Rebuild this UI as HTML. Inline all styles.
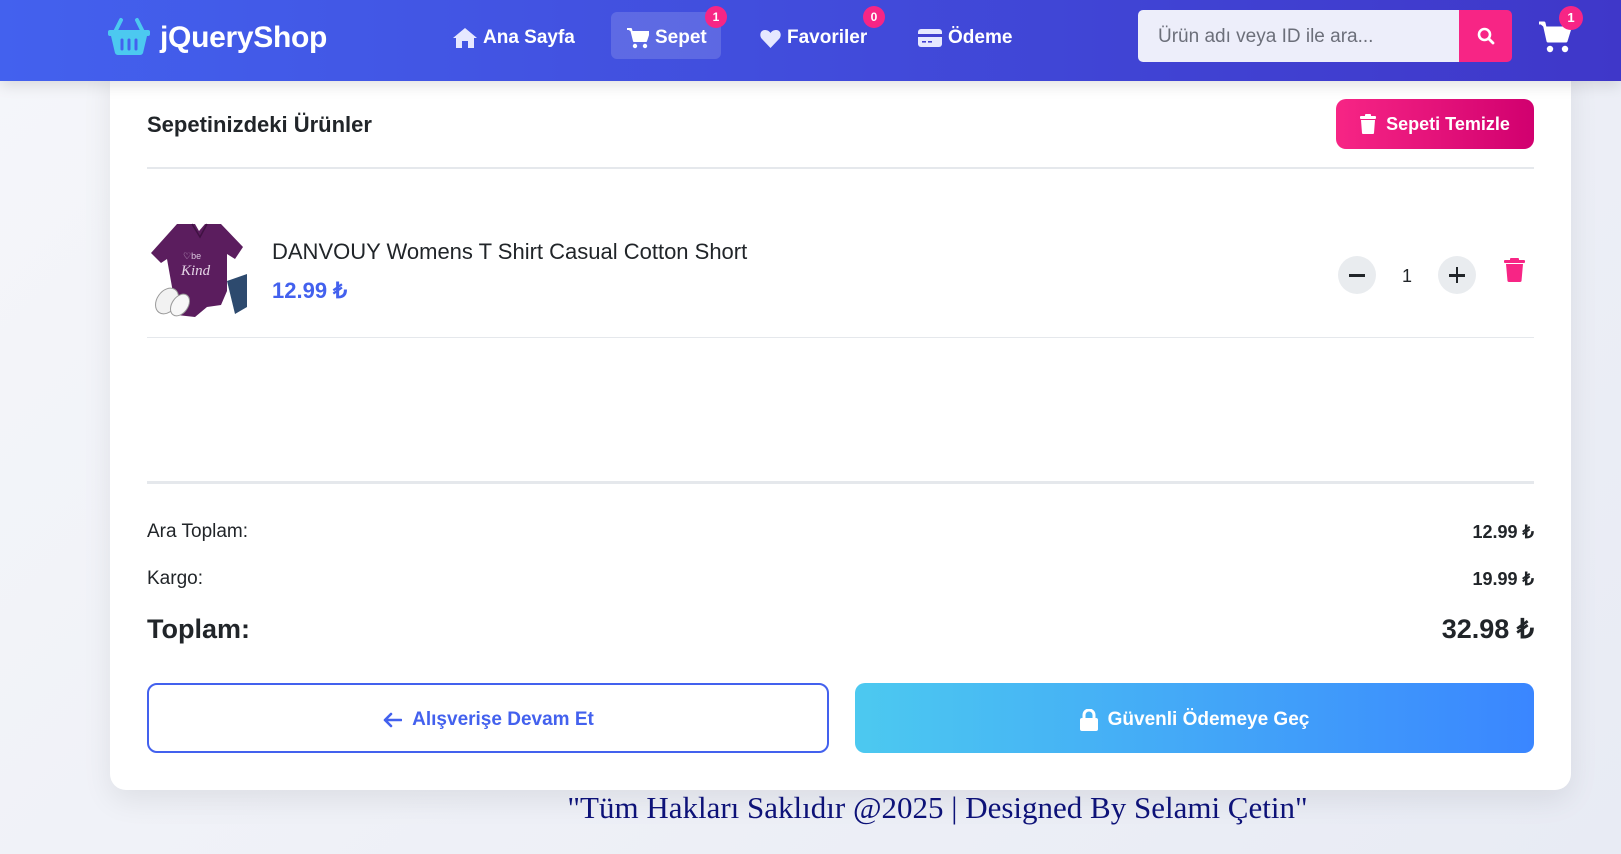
<!DOCTYPE html>
<html><head><meta charset="utf-8">
<style>
*{box-sizing:border-box;margin:0;padding:0}
html,body{width:1621px;height:854px;overflow:hidden}
body{font-family:"Liberation Sans",sans-serif;background:linear-gradient(135deg,#f5f6fa,#e8ebf4);position:relative;color:#212529}
.nav{position:absolute;left:0;top:0;width:1621px;height:81px;background:linear-gradient(90deg,#4361ee,#3f37c9);box-shadow:0 4px 14px rgba(0,0,0,.12);z-index:2}
.logo{position:absolute;left:108px;top:17px}
.brand{position:absolute;left:160px;top:21px;color:#fff;font-weight:bold;font-size:30px;letter-spacing:-0.3px}
.ni{position:absolute;top:27px;color:#fff;font-weight:bold;font-size:19px;display:flex;align-items:center;gap:6px}
.pill{position:absolute;left:611px;top:12px;width:110px;height:47px;background:rgba(255,255,255,.15);border-radius:6px}
.badge{position:absolute;width:22px;height:22px;border-radius:50%;background:#f72585;color:#fff;font-size:12px;font-weight:bold;text-align:center;line-height:22px}
.search{position:absolute;left:1138px;top:10px;width:321px;height:52px;background:#edeefa;border-radius:5px 0 0 5px;color:#6c6f7a;font-size:19px;padding:16px 0 0 20px}
.sbtn{position:absolute;left:1459px;top:10px;width:53px;height:52px;background:#f72585;border-radius:0 5px 5px 0}
.card{position:absolute;left:110px;top:60px;width:1461px;height:730px;background:#fff;border-radius:16px;box-shadow:0 10px 30px rgba(0,0,0,.08)}
.a{position:absolute}
.hr{position:absolute;left:147px;width:1387px;background:#e5e8ec}
.btnc{position:absolute;left:1336px;top:99px;width:198px;height:50px;border-radius:10px;background:linear-gradient(90deg,#f72585,#d1006f);color:#fff;font-weight:bold;font-size:18px;display:flex;align-items:center;justify-content:center;gap:10px}
.circ{position:absolute;top:256px;width:38px;height:38px;border-radius:50%;background:#e9ecef}
.row{position:absolute;left:147px;width:1387px;display:flex;justify-content:space-between;align-items:center}
</style></head><body>
<div class="nav">
  <svg class="logo" width="42" height="38" viewBox="0 0 42 38"><path d="M13 3 L7 15 M29 3 L35 15" stroke="#4cc9f0" stroke-width="4" stroke-linecap="round"/><rect x="0" y="13" width="42" height="6" rx="2" fill="#4cc9f0"/><path d="M3 19 H39 L35 36 Q34 38 32 38 H10 Q8 38 7 36 Z" fill="#4cc9f0"/><path d="M14 23 V32 M21 23 V32 M28 23 V32" stroke="#4361ee" stroke-width="3" stroke-linecap="round"/></svg>
  <div class="brand">jQueryShop</div>
  <div class="ni" style="left:453px"><svg width="24" height="20" viewBox="0 0 24 20"><path d="M12 0 L24 10 H21 V20 H15 V13 H9 V20 H3 V10 H0 Z" fill="#e6e8ff"/></svg>Ana Sayfa</div>
  <div class="pill"></div>
  <div class="ni" style="left:627px"><svg width="22" height="21" viewBox="0 0 22 21"><path d="M0 1 H4 L7 13 H19 L22 4 H5" fill="#fff" stroke="#fff" stroke-width="2" stroke-linejoin="round"/><circle cx="8" cy="18" r="2.2" fill="#fff"/><circle cx="18" cy="18" r="2.2" fill="#fff"/></svg>Sepet</div>
  <div class="badge" style="left:705px;top:6px">1</div>
  <div class="ni" style="left:760px"><svg width="21" height="19" viewBox="0 0 21 19"><path d="M10.5 19 L2 10 C-1 7 0 1 5 1 C8 1 10 3 10.5 4 C11 3 13 1 16 1 C21 1 22 7 19 10 Z" fill="#e6e8ff"/></svg>Favoriler</div>
  <div class="badge" style="left:863px;top:6px">0</div>
  <div class="ni" style="left:918px"><svg width="24" height="18" viewBox="0 0 24 18"><rect x="0" y="0" width="24" height="18" rx="3" fill="#e6e8ff"/><rect x="0" y="5" width="24" height="3" fill="#4240d0"/><rect x="4" y="12" width="4" height="1.6" fill="#4240d0"/><rect x="10" y="12" width="4" height="1.6" fill="#4240d0"/></svg>Ödeme</div>
  <div class="search">Ürün adı veya ID ile ara...</div>
  <div class="sbtn"><svg style="position:absolute;left:18px;top:17px" width="18" height="18" viewBox="0 0 18 18"><circle cx="7.5" cy="7.5" r="5.5" fill="none" stroke="#fff" stroke-width="2.6"/><path d="M11.5 11.5 L16 16" stroke="#fff" stroke-width="2.8" stroke-linecap="round"/></svg></div>
  <svg style="position:absolute;left:1538px;top:21px" width="34" height="32" viewBox="0 0 34 32"><path d="M1 2 H6 L10 20 H28 L32 7 H7" fill="#fff" stroke="#fff" stroke-width="3" stroke-linejoin="round"/><circle cx="12" cy="28" r="3.2" fill="#fff"/><circle cx="27" cy="28" r="3.2" fill="#fff"/></svg>
  <div class="badge" style="left:1559px;top:6px;width:24px;height:24px;line-height:24px;font-size:13px">1</div>
</div>
<div class="card"></div>
<div class="a" style="left:147px;top:112px;font-size:22px;font-weight:bold">Sepetinizdeki Ürünler</div>
<div class="btnc"><svg width="16" height="20" viewBox="0 0 16 20"><rect x="0" y="2" width="16" height="3" rx="1" fill="#fff"/><rect x="5" y="0" width="6" height="3" rx="1" fill="#fff"/><path d="M1 6 H15 L14 19 Q14 20 13 20 H3 Q2 20 2 19 Z" fill="#fff"/></svg>Sepeti Temizle</div>
<div class="hr" style="top:167px;height:2px"></div>
<svg class="a" style="left:147px;top:219px" width="100" height="101" viewBox="0 0 100 101">
<rect width="100" height="101" fill="#fff"/>
<path d="M80 62 L100 55 L100 88 L88 95 Z" fill="#2d4a6e"/>
<path d="M30 5 L48 5 L52 12 L58 5 L74 5 L96 28 L88 40 L80 35 L80 72 L74 86 L60 88 L48 98 L30 96 L20 40 L14 44 L4 34 Z" fill="#5b1d5e"/>
<path d="M45 5 L53 18 L60 5" fill="none" stroke="#3f1142" stroke-width="1.5"/>
<text x="36" y="40" font-size="9" fill="#d9c6dd" font-family="Liberation Sans,sans-serif">♡be</text>
<text x="34" y="56" font-size="15" fill="#e4d4e6" font-family="Liberation Serif,serif" font-style="italic">Kind</text>
<ellipse cx="20" cy="82" rx="10" ry="14" transform="rotate(35 20 82)" fill="#f2f2f2" stroke="#999"/>
<ellipse cx="33" cy="86" rx="8" ry="12" transform="rotate(35 33 86)" fill="#f7f7f7" stroke="#999"/>
</svg>
<div class="a" style="left:272px;top:239px;font-size:22px;color:#212529">DANVOUY Womens T Shirt Casual Cotton Short</div>
<div class="a" style="left:272px;top:278px;font-size:22px;font-weight:bold;color:#4361ee">12.99 ₺</div>
<div class="circ" style="left:1338px"><div style="position:absolute;left:11px;top:18px;width:16px;height:2.6px;background:#212529"></div></div>
<div class="a" style="left:1402px;top:266px;font-size:18px">1</div>
<div class="circ" style="left:1438px"><div style="position:absolute;left:11px;top:18px;width:16px;height:2.6px;background:#212529"></div><div style="position:absolute;left:17.7px;top:11px;width:2.6px;height:16px;background:#212529"></div></div>
<svg class="a" style="left:1504px;top:258px" width="21" height="24" viewBox="0 0 21 24"><rect x="0" y="2" width="21" height="3" rx="1" fill="#f72585"/><rect x="6" y="0" width="9" height="3" rx="1" fill="#f72585"/><path d="M2 6 H19 L17.5 23 Q17.3 24 16 24 H5 Q3.7 24 3.5 23 Z" fill="#f72585"/></svg>
<div class="hr" style="top:337px;height:1px"></div>
<div class="hr" style="top:481px;height:3px"></div>
<div class="row" style="top:521px;font-size:19px"><span>Ara Toplam:</span><span style="font-weight:bold;font-size:18px">12.99 ₺</span></div>
<div class="row" style="top:568px;font-size:19px"><span>Kargo:</span><span style="font-weight:bold;font-size:18px">19.99 ₺</span></div>
<div class="row" style="top:614px;font-size:27px;font-weight:bold"><span>Toplam:</span><span>32.98 ₺</span></div>
<div class="a" style="left:147px;top:683px;width:682px;height:70px;border:2px solid #4361ee;border-radius:10px;display:flex;align-items:center;justify-content:center;gap:10px;color:#4361ee;font-weight:bold;font-size:19px;padding-top:4px"><svg width="20" height="16" viewBox="0 0 20 16"><path d="M19 8 H3 M9 2 L3 8 L9 14" fill="none" stroke="#4361ee" stroke-width="2.6" stroke-linecap="round" stroke-linejoin="round"/></svg>Alışverişe Devam Et</div>
<div class="a" style="left:855px;top:683px;width:679px;height:70px;border-radius:10px;background:linear-gradient(90deg,#4cc9f0,#3a86ff);display:flex;align-items:center;justify-content:center;gap:10px;color:#fff;font-weight:bold;font-size:19px;padding-top:4px"><svg width="18" height="22" viewBox="0 0 18 22"><path d="M4 10 V6 A5 5 0 0 1 14 6 V10" fill="none" stroke="#fff" stroke-width="3"/><rect x="0" y="9" width="18" height="13" rx="2" fill="#fff"/></svg>Güvenli Ödemeye Geç</div>
<div class="a" style="left:560px;top:790px;width:755px;text-align:center;font-family:'Liberation Serif',serif;font-size:31px;color:#0d1278">"Tüm Hakları Saklıdır @2025 | Designed By Selami Çetin"</div>
</body></html>
